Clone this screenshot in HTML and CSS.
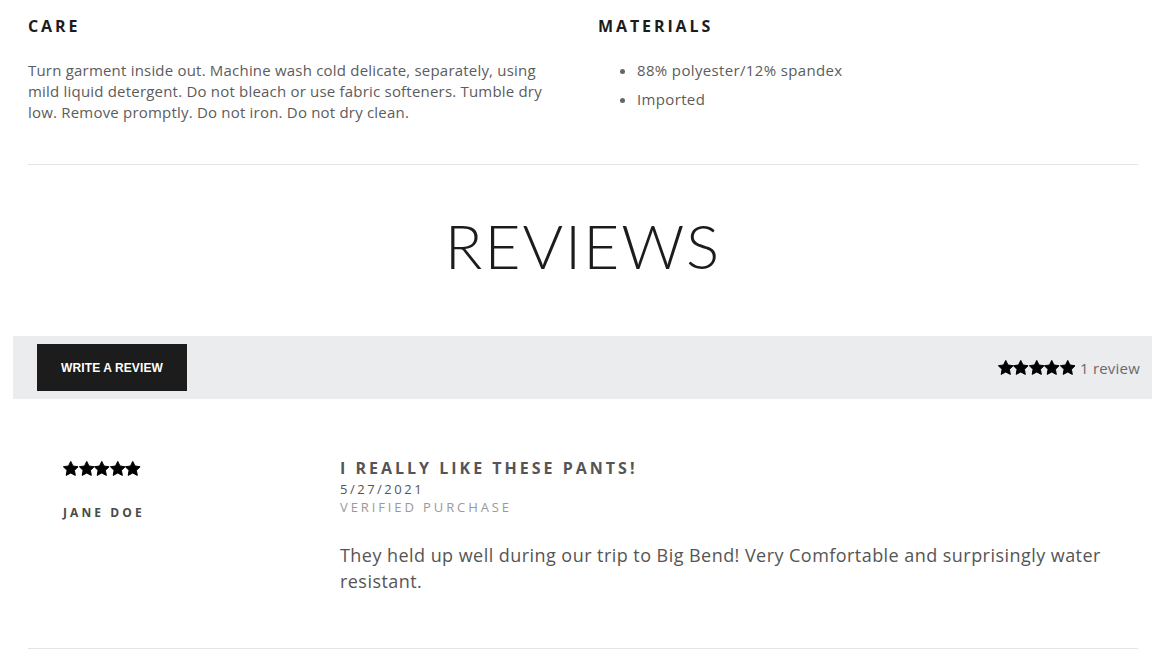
FILE: index.html
```html
<!DOCTYPE html>
<html>
<head>
<meta charset="utf-8">
<link rel="stylesheet" href="styles.css">
</head>
<body>
<div class="page">
  <section class="details">
    <div class="col">
      <h3 class="label">CARE</h3>
      <p class="care-text">Turn garment inside out. Machine wash cold delicate, separately, using mild liquid detergent. Do not bleach or use fabric softeners. Tumble dry low. Remove promptly. Do not iron. Do not dry clean.</p>
    </div>
    <div class="col">
      <h3 class="label">MATERIALS</h3>
      <ul class="materials">
        <li>88% polyester/12% spandex</li>
        <li>Imported</li>
      </ul>
    </div>
  </section>
  <hr class="rule">
  <h2 class="reviews-title">REVIEWS</h2>
  <div class="review-bar">
    <button class="write-btn">WRITE A REVIEW</button>
    <div class="summary">
      <span class="stars">
        <svg viewBox="0 0 24 24"><path d="M12 0.6L15.5 7.7L23.4 8.9L17.7 14.5L19.1 22.3L12 18.6L4.9 22.3L6.3 14.5L0.6 8.9L8.5 7.7Z"/></svg>
        <svg viewBox="0 0 24 24"><path d="M12 0.6L15.5 7.7L23.4 8.9L17.7 14.5L19.1 22.3L12 18.6L4.9 22.3L6.3 14.5L0.6 8.9L8.5 7.7Z"/></svg>
        <svg viewBox="0 0 24 24"><path d="M12 0.6L15.5 7.7L23.4 8.9L17.7 14.5L19.1 22.3L12 18.6L4.9 22.3L6.3 14.5L0.6 8.9L8.5 7.7Z"/></svg>
        <svg viewBox="0 0 24 24"><path d="M12 0.6L15.5 7.7L23.4 8.9L17.7 14.5L19.1 22.3L12 18.6L4.9 22.3L6.3 14.5L0.6 8.9L8.5 7.7Z"/></svg>
        <svg viewBox="0 0 24 24"><path d="M12 0.6L15.5 7.7L23.4 8.9L17.7 14.5L19.1 22.3L12 18.6L4.9 22.3L6.3 14.5L0.6 8.9L8.5 7.7Z"/></svg>
      </span>
      <span class="count">1 review</span>
    </div>
  </div>
  <article class="review">
    <div class="author-col">
      <span class="stars">
        <svg viewBox="0 0 24 24"><path d="M12 0.6L15.5 7.7L23.4 8.9L17.7 14.5L19.1 22.3L12 18.6L4.9 22.3L6.3 14.5L0.6 8.9L8.5 7.7Z"/></svg>
        <svg viewBox="0 0 24 24"><path d="M12 0.6L15.5 7.7L23.4 8.9L17.7 14.5L19.1 22.3L12 18.6L4.9 22.3L6.3 14.5L0.6 8.9L8.5 7.7Z"/></svg>
        <svg viewBox="0 0 24 24"><path d="M12 0.6L15.5 7.7L23.4 8.9L17.7 14.5L19.1 22.3L12 18.6L4.9 22.3L6.3 14.5L0.6 8.9L8.5 7.7Z"/></svg>
        <svg viewBox="0 0 24 24"><path d="M12 0.6L15.5 7.7L23.4 8.9L17.7 14.5L19.1 22.3L12 18.6L4.9 22.3L6.3 14.5L0.6 8.9L8.5 7.7Z"/></svg>
        <svg viewBox="0 0 24 24"><path d="M12 0.6L15.5 7.7L23.4 8.9L17.7 14.5L19.1 22.3L12 18.6L4.9 22.3L6.3 14.5L0.6 8.9L8.5 7.7Z"/></svg>
      </span>
      <div class="author">JANE DOE</div>
    </div>
    <div class="content-col">
      <h4 class="review-title">I REALLY LIKE THESE PANTS!</h4>
      <div class="review-date">5/27/2021</div>
      <div class="verified">VERIFIED PURCHASE</div>
      <p class="review-body">They held up well during our trip to Big Bend! Very Comfortable and surprisingly water resistant.</p>
    </div>
  </article>
  <hr class="rule rule-bottom">
</div>
</body>
</html>
```

FILE: styles.css
```css
* { box-sizing: border-box; }
html, body { margin: 0; padding: 0; background: #fff; }
body {
  font-family: "Open Sans", "Lato", sans-serif;
  color: #555;
}
.page {
  width: 1110px;
  margin-left: 28px;
  padding-top: 16px;
}
.details {
  display: grid;
  grid-template-columns: 540px 540px;
  column-gap: 30px;
}
.label {
  margin: 0;
  font-size: 16px;
  line-height: 21px;
  font-weight: 700;
  letter-spacing: 2.9px;
  color: #1c1c1c;
}
.care-text {
  margin: 23px 0 0;
  font-size: 15px;
  line-height: 21px;
  letter-spacing: 0.2px;
  color: #5c5c5c;
}
.materials {
  margin: 23px 0 0;
  padding-left: 39px;
  font-size: 15px;
  line-height: 21px;
  letter-spacing: 0.35px;
  color: #5c5c5c;
}
.materials li { margin-bottom: 8px; }
.materials li::marker { color: #666; }
.rule {
  margin: 41px 0 0;
  border: 0;
  border-top: 1px solid #e4e4e4;
  height: 0;
}
.reviews-title {
  margin: 40px 0 0;
  text-align: center;
  font-family: "Lato", sans-serif;
  font-size: 62px;
  line-height: 80px;
  font-weight: 300;
  letter-spacing: 2px;
  color: #1c1c1c;
}
.review-bar {
  margin: 51px -14px 0 -15px;
  background: #ebecee;
  height: 63px;
  padding: 8px 12px 8px 24px;
  display: flex;
  align-items: center;
  justify-content: space-between;
}
.write-btn {
  width: 150px;
  height: 47px;
  border: 0;
  background: #1c1c1c;
  color: #fff;
  font-family: "Liberation Sans", Arial, sans-serif;
  font-weight: 700;
  font-size: 12px;
  letter-spacing: 0.1px;
  padding: 0;
}
.summary {
  display: flex;
  align-items: center;
  gap: 5px;
}
.stars {
  display: flex;
}
.stars svg {
  width: 15.5px;
  height: 15.5px;
  fill: #000;
  stroke: #000;
  stroke-width: 1.5;
  stroke-linejoin: round;
}
.count {
  font-size: 15px;
  letter-spacing: 0.2px;
  color: #6a6a6a;
}
.review {
  display: grid;
  grid-template-columns: 277px 1fr;
  padding: 62px 35px 0;
}
.author {
  margin-top: 27px;
  font-size: 12px;
  font-weight: 700;
  letter-spacing: 3.1px;
  color: #4a4a4a;
}
.review-title {
  margin: -3px 0 0;
  font-size: 16px;
  line-height: 20px;
  font-weight: 700;
  letter-spacing: 3px;
  color: #555;
}
.review-date {
  margin-top: 3px;
  font-size: 13px;
  line-height: 17px;
  letter-spacing: 2.5px;
  color: #555;
}
.verified {
  margin-top: 1px;
  font-size: 13px;
  line-height: 17px;
  letter-spacing: 2.9px;
  color: #999;
}
.review-body {
  margin: 26px 0 0;
  font-size: 18px;
  line-height: 26px;
  letter-spacing: 0.45px;
  color: #555;
}
.rule-bottom { margin-top: 54px; }
```
